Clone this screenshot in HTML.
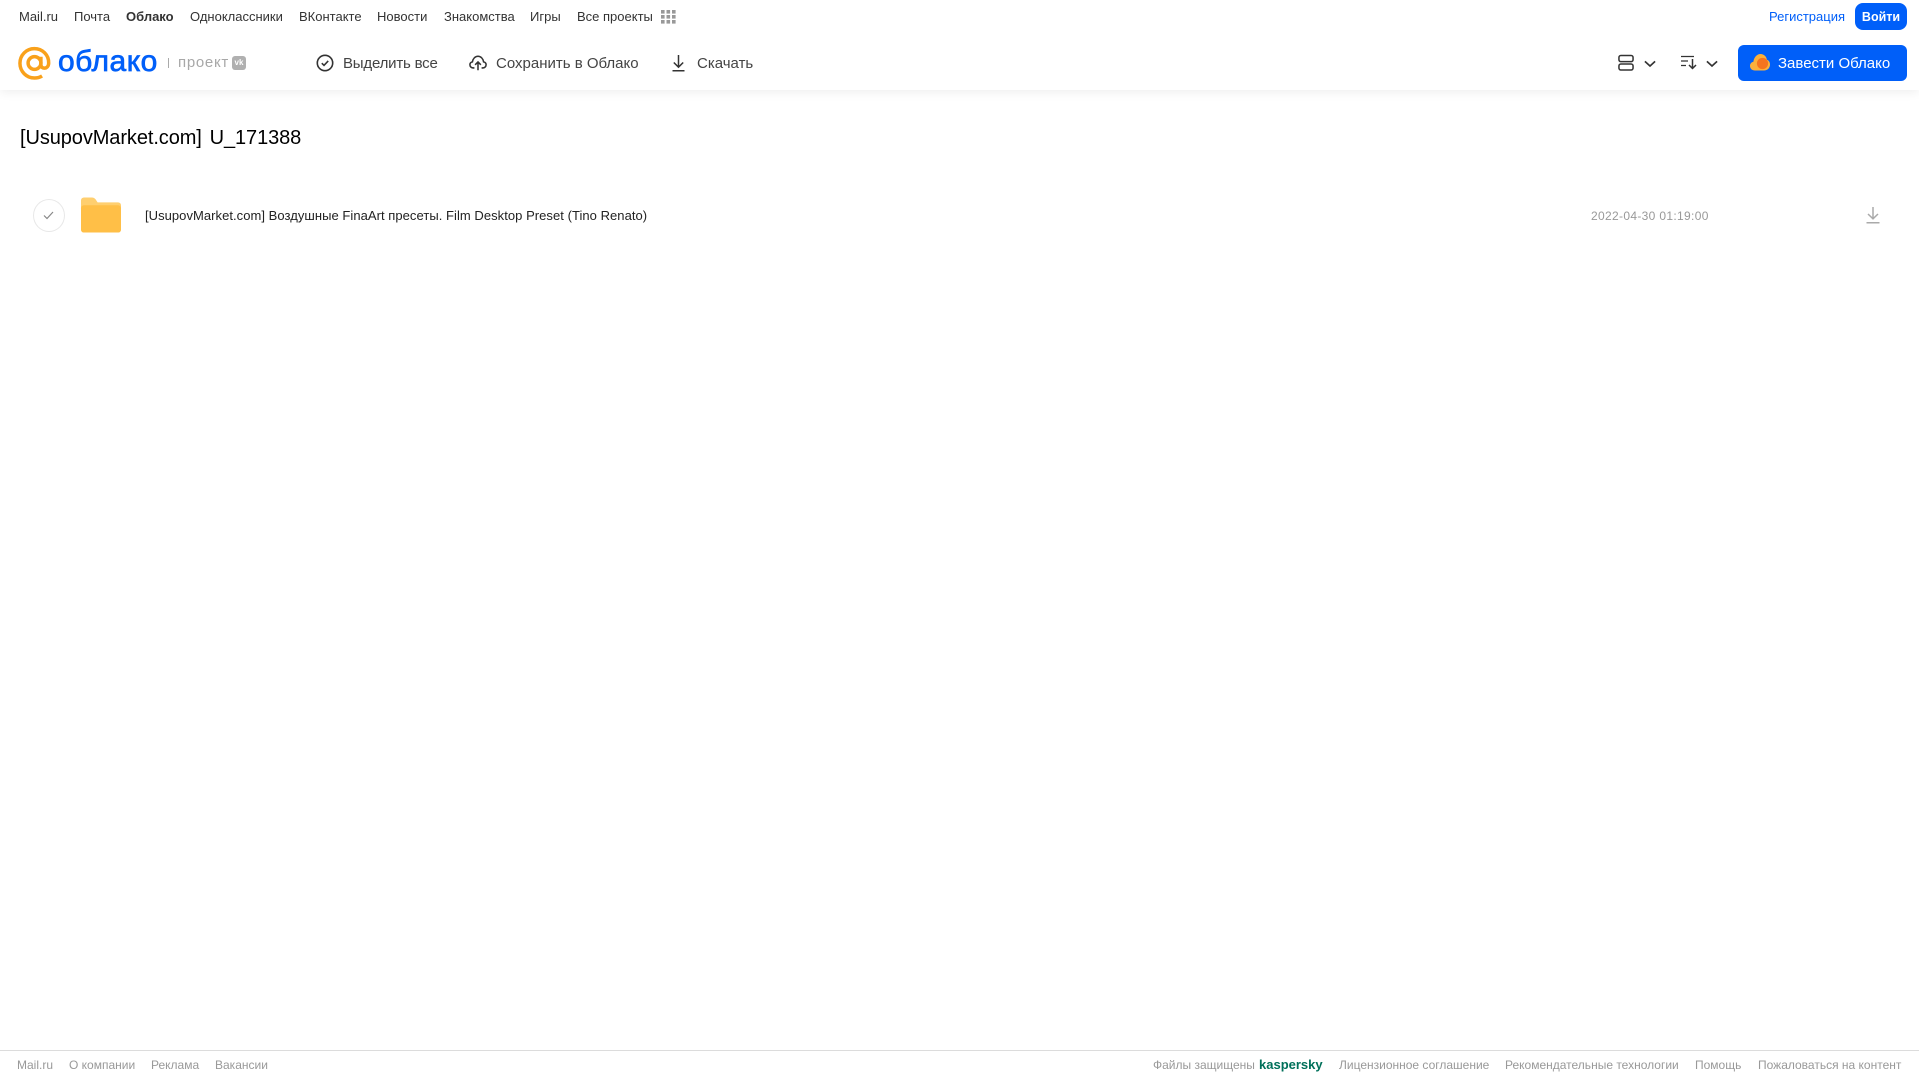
<!DOCTYPE html>
<html lang="ru"><head><meta charset="utf-8"><title>Облако</title>
<style>
html,body{margin:0;padding:0;background:#fff}
body{width:1919px;height:1079px;position:relative;overflow:hidden;font-family:"Liberation Sans",sans-serif}
.t{position:absolute;white-space:nowrap;line-height:20px}
.n{top:7px;font-size:13px;color:#333}
.a{top:54px;font-size:15px;color:#444}
.f{top:1055px;font-size:12px;color:#999}
svg{position:absolute;overflow:visible}
</style></head><body>
<div style="position:absolute;left:0;top:0;width:1919px;height:90px;background:#fff;box-shadow:0 2px 10px rgba(0,0,0,.07)"></div>

<span class="t n" style="left:19px">Mail.ru</span>
<span class="t n" style="left:74px">Почта</span>
<span class="t n" style="left:126px;font-weight:700">Облако</span>
<span class="t n" style="left:190px">Одноклассники</span>
<span class="t n" style="left:299px">ВКонтакте</span>
<span class="t n" style="left:377px">Новости</span>
<span class="t n" style="left:444px">Знакомства</span>
<span class="t n" style="left:530px">Игры</span>
<span class="t n" style="left:577px">Все проекты</span>
<svg style="left:661px;top:10px" width="15" height="14" fill="#999"><rect x="0" y="0" width="3.6" height="3.6"/><rect x="5.5" y="0" width="3.6" height="3.6"/><rect x="11" y="0" width="3.6" height="3.6"/><rect x="0" y="5" width="3.6" height="3.6"/><rect x="5.5" y="5" width="3.6" height="3.6"/><rect x="11" y="5" width="3.6" height="3.6"/><rect x="0" y="10" width="3.6" height="3.6"/><rect x="5.5" y="10" width="3.6" height="3.6"/><rect x="11" y="10" width="3.6" height="3.6"/></svg>

<span class="t" style="left:1769px;top:7px;font-size:13px;color:#005ff9">Регистрация</span>
<div style="position:absolute;left:1855px;top:3px;width:52px;height:27px;border-radius:8px;background:#005ff9;color:#fff;font-size:12.5px;font-weight:700;text-align:center;line-height:28px">Войти</div>

<svg style="left:18px;top:47px" width="33" height="33" viewBox="0 0 34 34" fill="none" stroke="#f9a11b" stroke-width="3.6"><circle cx="17" cy="16.5" r="6.6"/><path d="M23.6 10v8.2c0 5 7.8 5 8-1.5.3-8.600-6.600-15-14.800-15C8.500 1.700 2 8.500 2 16.800 2 25.200 8.700 32 17 32c3 0 5.500-.7 7.800-2.100"/></svg>
<span class="t" style="left:58px;top:44px;font-size:30px;line-height:36px;color:#005ff9;-webkit-text-stroke:.7px #005ff9;letter-spacing:.5px">облако</span>
<div style="position:absolute;left:168px;top:58px;width:1px;height:10px;background:#aaa"></div>
<span class="t" style="left:178px;top:53px;font-size:15px;color:#a8a8a8;letter-spacing:.7px">проект</span>
<div style="position:absolute;left:232px;top:56px;width:14px;height:14px;border-radius:3px;background:#b0b0b0;color:#fff;font-size:8px;font-weight:700;line-height:14px;text-align:center">vk</div>

<svg style="left:316px;top:54px" width="18" height="18" viewBox="0 0 18 18" fill="none" stroke="#333" stroke-width="1.600"><circle cx="9" cy="9" r="7.700"/><path d="M5.800 9.200l2.200 2.200 4.200-4.500"/></svg>
<span class="t a" style="left:343px;letter-spacing:-.2px">Выделить все</span>
<svg style="left:469px;top:54px" width="18" height="18" viewBox="0 0 20 18" fill="none" stroke="#333" stroke-width="1.700"><path d="M6 14.500H4.800C2.600 14.500 1 12.900 1 11c0-1.700 1.200-3 2.800-3.300C4.300 4.300 6.800 1.500 10 1.500s5.700 2.800 6.200 6.200C17.800 8 19 9.300 19 11c0 1.900-1.600 3.500-3.800 3.500H14"/><path d="M10 17V8M6.800 11L10 7.800l3.200 3.200"/></svg>
<span class="t a" style="left:496px">Сохранить в Облако</span>
<svg style="left:671px;top:54px" width="15" height="18" viewBox="0 0 15 18" fill="none" stroke="#333" stroke-width="1.500"><path d="M7.500 1v12M2.800 8.500l4.700 4.700 4.700-4.700M1.500 16.800h12"/></svg>
<span class="t a" style="left:697px">Скачать</span>

<svg style="left:1618px;top:54px" width="16" height="18" viewBox="0 0 17 18" fill="none" stroke="#333" stroke-width="1.600"><rect x="1" y="1" width="15" height="6.500" rx="2"/><rect x="1" y="10" width="15" height="6.500" rx="2"/></svg>
<svg style="left:1644px;top:60px" width="12" height="8" viewBox="0 0 13 8" fill="none" stroke="#333" stroke-width="1.800"><path d="M1 1.200l5.500 5 5.500-5"/></svg>
<svg style="left:1681px;top:55px" width="17" height="15" viewBox="0 0 17 15" fill="none" stroke="#333" stroke-width="1.200"><path d="M0 1.500h13M0 6h7M0 10.500h5"/><path d="M11.500 4v9.500M8 10l3.500 3.500 3.500-3.500" stroke-width="1.500"/></svg>
<svg style="left:1706px;top:60px" width="12" height="8" viewBox="0 0 13 8" fill="none" stroke="#333" stroke-width="1.800"><path d="M1 1.200l5.500 5 5.500-5"/></svg>

<div style="position:absolute;left:1738px;top:45px;width:169px;height:36px;border-radius:6px;background:#005ff9"></div>
<svg style="left:1750px;top:54px" width="20" height="17" viewBox="0 0 20 17"><path d="M5 16.500C2 16.500 0 14.500 0 12c0-2.200 1.500-3.800 3.400-4.200C3.900 3.500 6.800 0 10.500 0c3.500 0 6 2.600 6.400 5.800 1.800.6 3.100 2.300 3.100 4.700 0 3.500-2.500 6-6 6z" fill="#fbb03b"/><circle cx="12.500" cy="9.500" r="5.600" fill="#f5741f"/></svg>
<span class="t" style="left:1778px;top:54px;font-size:15px;color:#fff">Завести Облако</span>

<span class="t" style="left:20px;top:124px;font-size:20px;line-height:28px;color:#000;word-spacing:2.400px;letter-spacing:-.09px">[UsupovMarket.com] U_171388</span>

<div style="position:absolute;left:33px;top:199px;width:30px;height:31px;border:1px solid #e8e8e8;border-radius:50%"></div>
<svg style="left:43px;top:211px" width="11" height="9" viewBox="0 0 11 9" fill="none" stroke="#888" stroke-width="1.200"><path d="M1 4.500l3 3 6-6.500"/></svg>
<svg style="left:81px;top:197px" width="40" height="36" viewBox="0 0 41 36"><path d="M0 3a3 3 0 0 1 3-3h8c2 0 3 .8 4 2l2 3h21a3 3 0 0 1 3 3v25a3 3 0 0 1-3 3H3a3 3 0 0 1-3-3z" fill="#ffcf6f"/><path d="M0 11a3 3 0 0 1 3-3h35a3 3 0 0 1 3 3v22a3 3 0 0 1-3 3H3a3 3 0 0 1-3-3z" fill="#ffbf47"/></svg>
<span class="t" style="left:145px;top:206px;font-size:13px;color:#222;letter-spacing:.045px">[UsupovMarket.com] Воздушные FinaArt пресеты. Film Desktop Preset (Tino Renato)</span>
<span class="t" style="left:1591px;top:206px;font-size:12px;color:#999;letter-spacing:.33px">2022-04-30 01:19:00</span>
<svg style="left:1866px;top:206px" width="14" height="18" viewBox="0 0 14 18" fill="none" stroke="#aaa" stroke-width="1.500"><path d="M7 1v11.500M2 8l5 4.800L12 8M.5 16.800h13"/></svg>

<div style="position:absolute;left:0;top:1050px;width:1919px;height:1px;background:#dcdcdc"></div>
<span class="t f" style="left:17px">Mail.ru</span>
<span class="t f" style="left:69px">О компании</span>
<span class="t f" style="left:151px">Реклама</span>
<span class="t f" style="left:215px">Вакансии</span>
<span class="t f" style="left:1153px">Файлы защищены</span>
<span class="t f" style="left:1259px;font-size:13px;font-weight:700;color:#00705a">kaspersky</span>
<span class="t f" style="left:1339px">Лицензионное соглашение</span>
<span class="t f" style="left:1505px">Рекомендательные технологии</span>
<span class="t f" style="left:1695px">Помощь</span>
<span class="t f" style="left:1758px">Пожаловаться на контент</span>
</body></html>
